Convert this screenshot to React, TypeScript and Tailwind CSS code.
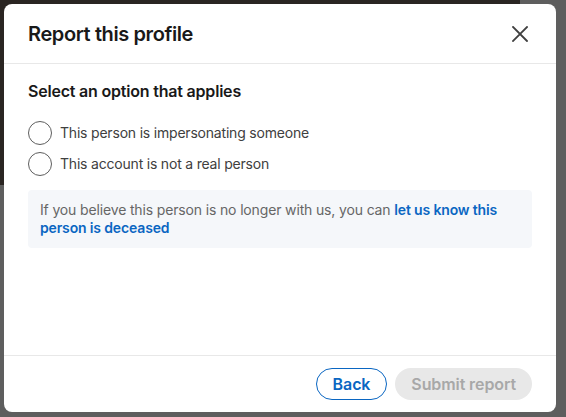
import { useState } from "react"

/* =====================
   OPTIONS
===================== */
const OPTIONS = [
  { id: "impersonating", label: "This person is impersonating someone" },
  { id: "fake", label: "This account is not a real person" },
]

function CloseIcon() {
  return (
    <svg width="16" height="16" viewBox="0 0 16 16" fill="none">
      <path
        d="M1 1 15 15 M15 1 1 15"
        stroke="#404040"
        strokeWidth="1.8"
        strokeLinecap="square"
      />
    </svg>
  )
}

function Radio({ checked }: { checked: boolean }) {
  return (
    <span className="flex h-6 w-6 shrink-0 items-center justify-center rounded-full border border-[#5e5e5e] bg-white">
      {checked && <span className="h-3 w-3 rounded-full bg-[#0a66c2]" />}
    </span>
  )
}

/* =====================
   MAIN
===================== */
export default function App() {
  const [selected, setSelected] = useState<string | null>(null)

  return (
    <div
      className="relative h-[417px] w-[566px] overflow-hidden bg-[#5e5e5e] pt-1 pl-1"
      style={{ fontFamily: 'Inter, "Noto Sans", sans-serif' }}
    >
      {/* backdrop photo */}
      <div className="absolute left-0 top-0 h-[185px] w-[520px] bg-[#2a2522]" />

      {/* DIALOG */}
      <div className="relative flex h-[408px] w-[552px] flex-col rounded-lg bg-white">
        {/* HEADER */}
        <header className="flex h-[60px] items-center justify-between border-b border-[#e8e8e8] px-6">
          <h2 className="text-[20px] font-semibold leading-6 tracking-[-0.4px] text-[#191919]">
            Report this profile
          </h2>
          <button className="flex h-6 w-6 items-center justify-center">
            <CloseIcon />
          </button>
        </header>

        {/* BODY */}
        <div className="flex-1 px-6 pt-[17px] tracking-[-0.2px]">
          <h3 className="text-[16px] font-semibold leading-5 text-[#191919]">
            Select an option that applies
          </h3>

          <div className="mt-[20px] flex flex-col gap-[7px]">
            {OPTIONS.map((o) => (
              <label
                key={o.id}
                onClick={() => setSelected(o.id)}
                className="flex cursor-pointer items-center gap-2"
              >
                <Radio checked={selected === o.id} />
                <span className="text-[14px] leading-5 text-[#404040]">
                  {o.label}
                </span>
              </label>
            ))}
          </div>

          <div className="mt-[14px] rounded bg-[#f5f7fa] px-3 py-[11px] text-[14px] leading-[18px] tracking-[-0.15px] text-[#666666]">
            If you believe this person is no longer with us, you can{" "}
            <a className="font-semibold text-[#0a66c2]">
              let us know this person is deceased
            </a>
          </div>
        </div>

        {/* FOOTER */}
        <footer className="flex justify-end gap-2 border-t border-[#e8e8e8] px-6 py-3 tracking-[-0.1px]">
          <button className="h-8 rounded-full border border-[#0a66c2] px-4 text-[16px] font-semibold text-[#0a66c2]">
            Back
          </button>
          <button
            disabled={!selected}
            className="h-8 rounded-full bg-[#e8e8e8] px-4 text-[16px] font-semibold text-[#a8a8a8]"
          >
            Submit report
          </button>
        </footer>
      </div>
    </div>
  )
}
